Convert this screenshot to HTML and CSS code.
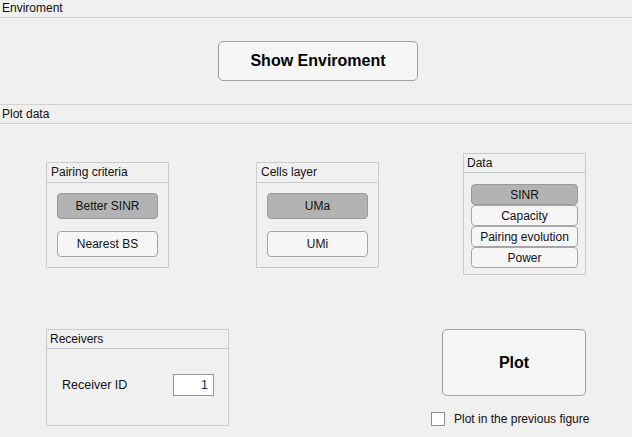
FILE: index.html
```html
<!DOCTYPE html>
<html>
<head>
<meta charset="utf-8">
<link rel="stylesheet" href="styles.css">
</head>
<body>
<div class="app">
  <div class="section-title first">Enviroment</div>
  <div class="env-body">
    <button class="btn big show-env">Show Enviroment</button>
  </div>
  <div class="section-title">Plot data</div>
  <div class="plot-body">
    <div class="row1">
      <div class="panel pairing">
        <div class="panel-title">Pairing criteria</div>
        <div class="panel-body pair-body">
          <button class="btn toggle on">Better SINR</button>
          <button class="btn toggle">Nearest BS</button>
        </div>
      </div>
      <div class="panel cells">
        <div class="panel-title">Cells layer</div>
        <div class="panel-body pair-body">
          <button class="btn toggle on">UMa</button>
          <button class="btn toggle">UMi</button>
        </div>
      </div>
      <div class="panel data">
        <div class="panel-title short">Data</div>
        <div class="panel-body data-body">
          <button class="btn list on">SINR</button>
          <button class="btn list">Capacity</button>
          <button class="btn list">Pairing evolution</button>
          <button class="btn list">Power</button>
        </div>
      </div>
    </div>
    <div class="row2">
      <div class="panel receivers">
        <div class="panel-title short">Receivers</div>
        <div class="panel-body recv-body">
          <span class="recv-label">Receiver ID</span>
          <div class="num-input">1</div>
        </div>
      </div>
      <div class="plot-col">
        <button class="btn big plot">Plot</button>
        <label class="check-row"><span class="checkbox"></span><span>Plot in the previous figure</span></label>
      </div>
    </div>
  </div>
</div>
</body>
</html>
```
FILE: styles.css
```css
* { box-sizing: border-box; }
html, body {
  margin: 0;
  padding: 0;
  background: #f0f0f0;
}
body {
  font-family: "Liberation Sans", Arial, sans-serif;
  font-size: 12px;
  color: #111;
  width: 632px;
  height: 437px;
  overflow: hidden;
}
.section-title {
  height: 20px;
  line-height: 18px;
  padding-left: 2px;
  border-top: 1px solid #d2d2d2;
  border-bottom: 1px solid #d2d2d2;
}
.section-title.first {
  height: 18px;
  line-height: 16px;
  border-top: none;
}
.env-body {
  height: 86px;
  padding-top: 23px;
  padding-left: 218px;
}
.btn {
  font-family: "Liberation Sans", Arial, sans-serif;
  font-size: 12px;
  color: #111;
  background: #f6f6f6;
  border: 1px solid #a6a6a6;
  border-radius: 4px;
  padding: 0;
  margin: 0;
  display: block;
}
.btn.big {
  font-size: 16px;
  font-weight: bold;
  color: #000;
  border-color: #a0a0a0;
  border-radius: 5px;
}
.show-env {
  width: 200px;
  height: 40px;
}
.plot-body {
  display: flex;
  flex-direction: column;
}
.row1 {
  display: flex;
  align-items: flex-start;
  padding-top: 29px;
  height: 151px;
}
.panel {
  border: 1px solid #cbcbcb;
  display: flex;
  flex-direction: column;
}
.panel-title {
  height: 20px;
  line-height: 19px;
  padding-left: 4px;
  border-bottom: 1px solid #cbcbcb;
}
.panel-title.short {
  height: 19px;
  line-height: 18px;
  padding-left: 3px;
}
.pairing {
  margin-left: 46px;
  margin-top: 9px;
  width: 123px;
  height: 106px;
}
.cells {
  margin-left: 87px;
  margin-top: 9px;
  width: 123px;
  height: 106px;
}
.pair-body {
  display: flex;
  flex-direction: column;
  padding: 10px 0 0 10px;
  gap: 12px;
}
.toggle {
  width: 101px;
  height: 26px;
}
.on {
  background: #b3b3b3;
  border-color: #9a9a9a;
}
.data {
  margin-left: 84px;
  width: 123px;
  height: 122px;
}
.data-body {
  display: flex;
  flex-direction: column;
  padding: 11px 0 0 7px;
}
.list {
  width: 107px;
  height: 21px;
  font-size: 12px;
}
.row2 {
  display: flex;
  align-items: flex-start;
  margin-top: 54px;
}
.receivers {
  margin-left: 46px;
  width: 183px;
  height: 97px;
}
.recv-body {
  display: flex;
  align-items: center;
  padding: 25px 0 0 15px;
}
.recv-label {
  width: 111px;
  font-size: 12.5px;
  line-height: 22px;
}
.num-input {
  width: 41px;
  height: 22px;
  background: #fff;
  border: 1px solid #999;
  text-align: right;
  padding-right: 5px;
  line-height: 20px;
  font-size: 12.5px;
  color: #0a2a6a;
}
.plot-col {
  margin-left: 202px;
  display: flex;
  flex-direction: column;
}
.plot {
  margin-left: 11px;
  width: 144px;
  height: 67px;
}
.check-row {
  display: flex;
  align-items: center;
  margin-top: 16px;
  gap: 9px;
  font-size: 12px;
}
.checkbox {
  width: 14px;
  height: 14px;
  background: #fff;
  border: 1px solid #8f8f8f;
}
```
